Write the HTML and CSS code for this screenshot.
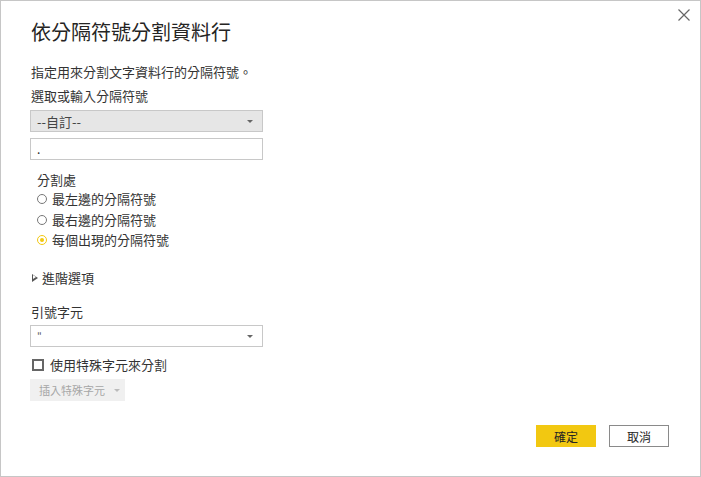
FILE: index.html
```html
<!DOCTYPE html>
<html lang="zh-Hant">
<head>
<meta charset="utf-8">
<link rel="stylesheet" href="styles.css">
</head>
<body>
<div class="dialog">
  <button class="close" aria-label="關閉">
    <svg width="12" height="12" viewBox="0 0 12 12"><path d="M0.5 0.5 L11.5 11.5 M11.5 0.5 L0.5 11.5" stroke="#666" stroke-width="1.2" fill="none"/></svg>
  </button>
  <h1 class="title">依分隔符號分割資料行</h1>
  <p class="desc">指定用來分割文字資料行的分隔符號。</p>
  <div class="label">選取或輸入分隔符號</div>
  <div class="select select-grey"><span>--自訂--</span><span class="caret"></span></div>
  <div class="input">.</div>
  <div class="group">
    <div class="group-label">分割處</div>
    <div class="radio"><span class="dot"></span>最左邊的分隔符號</div>
    <div class="radio"><span class="dot"></span>最右邊的分隔符號</div>
    <div class="radio"><span class="dot checked"></span>每個出現的分隔符號</div>
  </div>
  <div class="advanced"><span class="tri"></span>進階選項</div>
  <div class="label label2">引號字元</div>
  <div class="select"><span class="quote">"</span><span class="caret"></span></div>
  <div class="check"><span class="box"></span>使用特殊字元來分割</div>
  <div class="disabled-btn">插入特殊字元<span class="caret light"></span></div>
  <div class="footer">
    <button class="btn primary">確定</button>
    <button class="btn">取消</button>
  </div>
</div>
</body>
</html>
```
FILE: styles.css
```css
* { box-sizing: border-box; }
html, body { margin: 0; padding: 0; background: #fff; }
body {
  font-family: "Segoe UI", "Noto Sans CJK TC", "Noto Sans", sans-serif;
  color: #252423;
}
.dialog {
  position: relative;
  width: 701px;
  height: 477px;
  border: 1px solid #c6c6c6;
  padding: 0 0 0 29px;
  display: flex;
  flex-direction: column;
  align-items: flex-start;
}
.close {
  position: absolute;
  top: 8px;
  right: 10px;
  width: 12px;
  height: 12px;
  padding: 0;
  border: 0;
  background: none;
  display: flex;
}
.title {
  margin: 18px 0 0 1px;
  font-size: 20px;
  line-height: 26px;
  font-weight: 400;
  color: #252423;
}
.desc {
  margin: 18px 0 0 1px;
  font-size: 13px;
  line-height: 18px;
  color: #333;
}
.label {
  margin: 6px 0 0 1px;
  font-size: 13px;
  line-height: 18px;
  color: #333;
}
.select {
  width: 233px;
  height: 22px;
  border: 1px solid #c8c8c8;
  display: flex;
  align-items: center;
  justify-content: space-between;
  padding: 0 9px 0 6px;
  font-size: 13px;
  color: #333;
  margin-top: 5px;
}
.select-grey { background: #e6e6e6; color: #444; }
.caret {
  width: 0; height: 0;
  border-left: 3px solid transparent;
  border-right: 3px solid transparent;
  border-top: 3px solid #666;
}
.caret.light { border-top-color: #bbb; margin-left: 9px; }
.quote { font-size: 10px; color: #555; }
.input {
  width: 233px;
  height: 22px;
  border: 1px solid #c8c8c8;
  margin-top: 6px;
  padding: 0 6px;
  font-size: 12px;
  line-height: 20px;
}
.group { margin: 11px 0 0 7px; }
.group-label { font-size: 13px; line-height: 18px; color: #333; }
.radio {
  display: flex;
  align-items: center;
  font-size: 13px;
  line-height: 20px;
  color: #333;
  margin-left: 0;
}
.radio + .radio { margin-top: 0.5px; }
.dot {
  width: 10px; height: 10px;
  border: 1.5px solid #777;
  border-radius: 50%;
  margin-right: 5px;
  display: flex;
  align-items: center;
  justify-content: center;
}
.dot.checked { border-color: #f2c811; }
.dot.checked::after {
  content: "";
  width: 4px; height: 4px;
  border-radius: 50%;
  background: #f2c811;
}
.advanced {
  margin-top: 19px;
  display: flex;
  align-items: center;
  font-size: 13px;
  line-height: 18px;
  color: #333;
}
.tri {
  width: 0; height: 0;
  border-top: 4px solid transparent;
  border-bottom: 4px solid transparent;
  border-left: 6px solid #555;
  position: relative;
  margin-right: 4px;
  margin-left: 2px;
}
.tri::after {
  content: "";
  position: absolute;
  left: -5px; top: -2.6px;
  border-top: 2.6px solid transparent;
  border-bottom: 2.6px solid transparent;
  border-left: 3.5px solid #fff;
}
.label2 { margin-top: 16px; }
.label2 + .select { margin-top: 4px; }
.check {
  margin-top: 9px;
  display: flex;
  align-items: center;
  font-size: 13px;
  line-height: 18px;
  color: #333;
}
.box {
  width: 12px; height: 12px;
  border: 2px solid #666;
  margin: 0 6px 0 2px;
}
.disabled-btn {
  margin-top: 5px;
  width: 95px;
  height: 22px;
  background: #f0f0f0;
  color: #a6a6a6;
  font-size: 11px;
  white-space: nowrap;
  display: flex;
  align-items: center;
  padding-left: 9px;
}
.footer {
  margin-top: 24px;
  align-self: stretch;
  display: flex;
  justify-content: flex-end;
  gap: 13px;
  padding-right: 31px;
}
.btn {
  width: 60px;
  height: 22px;
  border: 1px solid #8a8a8a;
  background: #fff;
  font-family: inherit;
  font-size: 12px;
  color: #252423;
  padding: 0;
}
.btn.primary { background: #f2c811; border-color: #f2c811; }
```
